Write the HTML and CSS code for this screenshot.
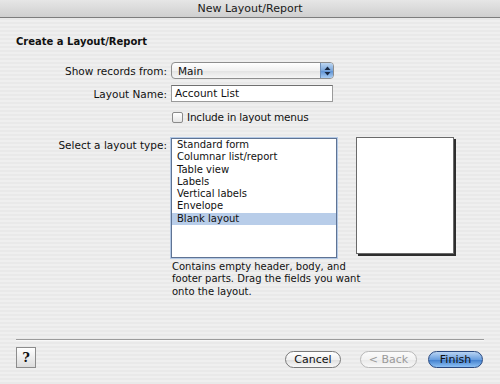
FILE: index.html
```html
<!DOCTYPE html>
<html lang="en">
<head>
  <meta charset="UTF-8" />
  <meta name="viewport" content="width=device-width, initial-scale=1.0"/>
  <title>New Layout/Report</title>
  <link rel="stylesheet" href="styles.css">
</head>
<body>
  <div class="window">
    <div class="titlebar">New Layout/Report</div>

    <div class="content">
      <h1 class="heading">Create a Layout/Report</h1>

      <div class="row row-popup">
        <span class="label">Show records from:</span>
        <div class="popup">
          <span class="popup-text">Main</span>
          <span class="popup-arrows">
            <svg width="7" height="10" viewBox="0 0 7 10">
              <path d="M3.5 0.5 L6.5 4 L0.5 4 Z" fill="#1a2a44"/>
              <path d="M3.5 9.5 L6.5 6 L0.5 6 Z" fill="#1a2a44"/>
            </svg>
          </span>
        </div>
      </div>

      <div class="row row-name">
        <span class="label">Layout Name:</span>
        <div class="textfield">Account List</div>
      </div>

      <div class="row row-check">
        <span class="label"></span>
        <span class="checkbox"><span class="box"></span>Include in layout menus</span>
      </div>

      <div class="row row-type">
        <span class="label">Select a layout type:</span>
        <div class="type-area">
          <div class="type-row">
            <ul class="list">
              <li>Standard form</li>
              <li>Columnar list/report</li>
              <li>Table view</li>
              <li>Labels</li>
              <li>Vertical labels</li>
              <li>Envelope</li>
              <li class="selected">Blank layout</li>
            </ul>
            <div class="preview"></div>
          </div>
          <p class="desc">Contains empty header, body, and<br>footer parts. Drag the fields you want<br>onto the layout.</p>
        </div>
      </div>
    </div>

    <div class="footer">
      <div class="separator"></div>
      <div class="buttons">
        <button class="help">?</button>
        <div class="actions">
          <button class="btn">Cancel</button>
          <button class="btn btn-disabled">&lt; Back</button>
          <button class="btn btn-default">Finish</button>
        </div>
      </div>
    </div>
  </div>
</body>
</html>
```

FILE: styles.css
```css
* {
  box-sizing: border-box;
}

body {
  margin: 0;
  font-family: "DejaVu Sans", sans-serif;
  font-size: 10.5px;
  color: #111;
}

.window {
  width: 500px;
  height: 384px;
  display: flex;
  flex-direction: column;
  background: repeating-linear-gradient(#efefef 0 2px, #e9e9e9 2px 4px);
}

.titlebar {
  height: 18px;
  line-height: 17px;
  text-align: center;
  font-size: 11px;
  color: #1a1a1a;
  background: linear-gradient(#e6e6e6, #cfcfcf);
  border-bottom: 1px solid #7d7d7d;
}

.content {
  padding: 0 16px;
}

.heading {
  margin: 17px 0 0;
  font-size: 10px;
  font-weight: bold;
  line-height: 13px;
}

.row {
  display: flex;
  align-items: center;
  gap: 4px;
}

.label {
  width: 151px;
  flex: none;
  text-align: right;
}

.row-popup {
  margin-top: 14px;
}

.row-name {
  margin-top: 6px;
}

.row-check {
  margin-top: 9px;
}

.row-type {
  margin-top: 15px;
  align-items: flex-start;
}

.row-type .label {
  margin-top: 1px;
}

.popup {
  width: 163px;
  height: 17px;
  display: flex;
  align-items: center;
  border: 1px solid #8e8e8e;
  border-radius: 4px;
  background: linear-gradient(#ffffff, #f1f1f1 50%, #e2e2e2 51%, #f6f6f6);
  overflow: hidden;
}

.popup-text {
  flex: 1;
  padding-left: 6px;
}

.popup-arrows {
  width: 13px;
  height: 100%;
  display: flex;
  align-items: center;
  justify-content: center;
  border-left: 1px solid #6f8fb8;
  background: linear-gradient(#bcd6f2, #7ba7dc 50%, #5a8fd2 51%, #a9cdf3);
}

.textfield {
  width: 162px;
  height: 17px;
  line-height: 15px;
  padding-left: 3px;
  background: #fff;
  border: 1px solid #9a9a9a;
  border-top-color: #707070;
}

.checkbox {
  display: flex;
  align-items: center;
  gap: 4px;
  margin-left: 1px;
  letter-spacing: -0.2px;
}

.box {
  width: 11px;
  height: 11px;
  border: 1px solid #8a8a8a;
  border-radius: 2px;
  background: linear-gradient(#ffffff, #e6e6e6);
}

.type-row {
  display: flex;
  align-items: flex-start;
  gap: 19px;
}

.list {
  width: 166px;
  height: 120px;
  margin: 0;
  padding: 0;
  list-style: none;
  background: #fff;
  border: 1px solid #5f7393;
  box-shadow: 0 0 0 1px #b3c9e6;
}

.list li {
  height: 12.3px;
  line-height: 12.3px;
  padding-left: 5px;
  font-size: 10px;
}

.list .selected {
  background: #b8cde9;
}

.preview {
  width: 98px;
  height: 117px;
  margin-top: -1px;
  background: #fff;
  border: 1px solid #6a6a6a;
  box-shadow: 2px 2px 0 #2e2e2e;
}

.desc {
  margin: 3px 0 0 1px;
  font-size: 10px;
  line-height: 12.4px;
}

.footer {
  margin-top: auto;
  padding: 0 16px 16px;
}

.separator {
  height: 2px;
  border-top: 1px solid #9c9c9c;
  border-bottom: 1px solid #f8f8f8;
}

.buttons {
  display: flex;
  align-items: center;
  justify-content: space-between;
  margin-top: 6px;
}

.help {
  width: 20px;
  height: 21px;
  padding: 0;
  font-family: "DejaVu Serif", serif;
  font-size: 13px;
  font-weight: bold;
  color: #111;
  border: 1px solid #8c8c8c;
  background: linear-gradient(#ffffff, #dcdcdc);
}

.actions {
  display: flex;
  align-items: center;
  margin-right: 1px;
}

.btn {
  width: 56px;
  height: 17px;
  padding: 0;
  margin-left: 19px;
  margin-top: 3px;
  font-family: "DejaVu Sans", sans-serif;
  font-size: 11px;
  color: #111;
  border: 1px solid #7a7a7a;
  border-radius: 9px;
  background: linear-gradient(#ffffff, #f0f0f0 50%, #dedede 51%, #f8f8f8);
}

.btn-disabled {
  width: 57px;
  color: #9a9a9a;
  border-color: #b8b8b8;
  background: linear-gradient(#fbfbfb, #f2f2f2 50%, #e9e9e9 51%, #f8f8f8);
}

.btn-default {
  width: 55px;
  margin-left: 11px;
  border-color: #2b4a80;
  background: linear-gradient(#b9d4f3, #6a9fdf 50%, #3f7dcc 51%, #8cc0f4);
}
```
